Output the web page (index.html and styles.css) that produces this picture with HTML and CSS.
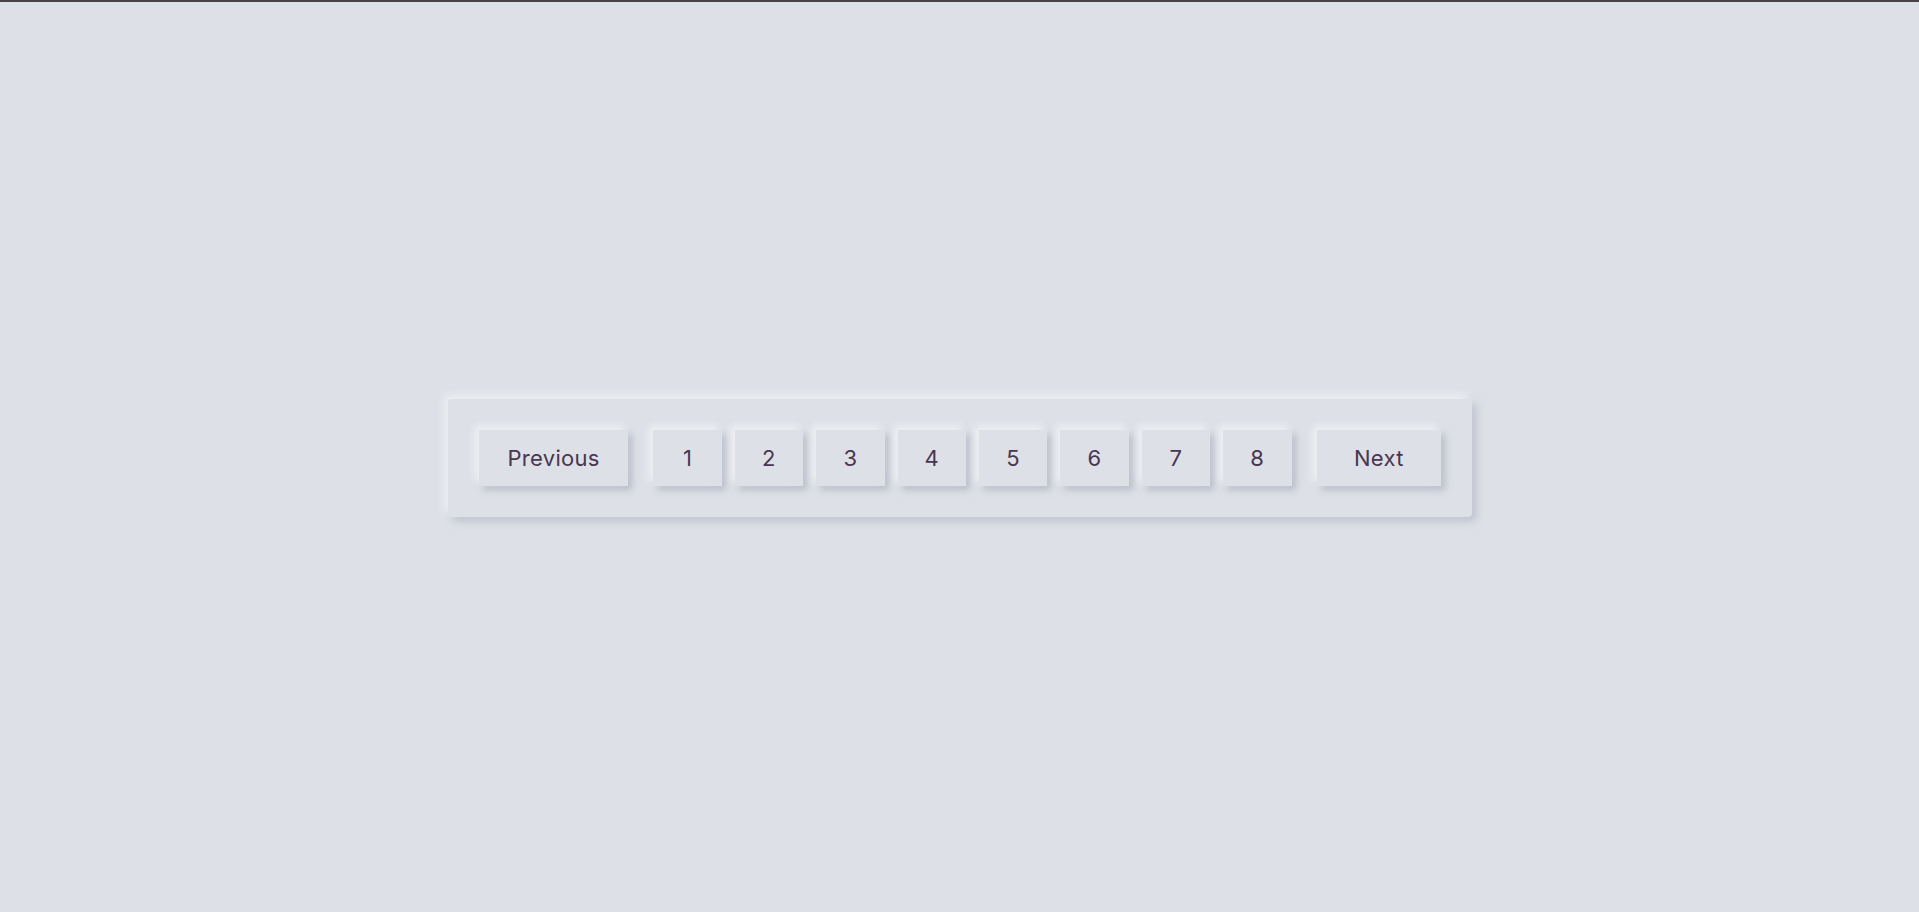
FILE: index.html
```html
<!DOCTYPE html>
<html lang="en">
<head>
<meta charset="utf-8">
<title>Pagination</title>
<link rel="stylesheet" href="styles.css">
</head>
<body>
<div class="page">
  <nav class="pager">
    <a class="btn btn-wide btn-prev" href="#">Previous</a>
    <div class="pages">
      <a class="btn btn-num" href="#">1</a>
      <a class="btn btn-num" href="#">2</a>
      <a class="btn btn-num" href="#">3</a>
      <a class="btn btn-num" href="#">4</a>
      <a class="btn btn-num" href="#">5</a>
      <a class="btn btn-num" href="#">6</a>
      <a class="btn btn-num" href="#">7</a>
      <a class="btn btn-num" href="#">8</a>
    </div>
    <a class="btn btn-wide btn-next" href="#">Next</a>
  </nav>
</div>
</body>
</html>
```
FILE: styles.css
```css
* { box-sizing: border-box; }
html, body { margin: 0; padding: 0; }
body {
  background: #dde0e7;
  border-top: 2px solid #4a4048;
  height: 912px;
  font-family: Inter, "Noto Sans", sans-serif;
  overflow: hidden;
}
.page {
  height: 910px;
  display: flex;
  justify-content: center;
  padding-top: 397px;
  padding-left: 1px;
}
.pager {
  width: 1024px;
  height: 118px;
  padding: 31px;
  display: flex;
  align-items: flex-start;
  gap: 25px;
  background: #dde0e7;
  border-radius: 4px;
  box-shadow: -4px -4px 8px rgba(255,255,255,0.55), 4px 4px 8px rgba(160,165,180,0.55);
}
.pages {
  display: flex;
  gap: 12.9px;
}
.btn {
  height: 56px;
  display: flex;
  align-items: center;
  justify-content: center;
  text-decoration: none;
  color: #4a3650;
  font-size: 22px;
  letter-spacing: 0.3px;
  background: #dde0e7;
  box-shadow: -4px -4px 8px rgba(255,255,255,0.6), 4px 4px 7px rgba(160,165,180,0.6);
}
.btn-prev { width: 150px; }
.btn-next { width: 125px; }
.btn-num { width: 68.5px; }
```
